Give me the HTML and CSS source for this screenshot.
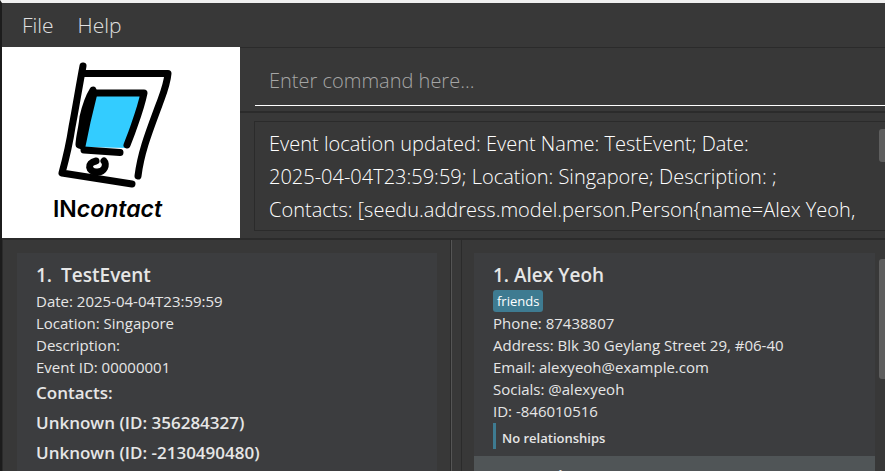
FILE: index.html
```html
<!DOCTYPE html>
<html lang="en">
<head>
<meta charset="utf-8">
<title>INcontact</title>
<link rel="stylesheet" href="styles.css">
</head>
<body>
<div class="window">
  <nav class="menu">
    <button type="button">File</button>
    <button type="button">Help</button>
  </nav>
  <header class="top">
    <svg class="logo" viewBox="0 0 238 191" role="img" aria-label="INcontact logo">
      <rect width="238" height="191" fill="#fff"/>
      <path d="M93 48 L139 49 L126 101 L82 100 Z" fill="#33ccff"/>
      <g fill="none" stroke="#000" stroke-linecap="round" stroke-linejoin="round">
        <path stroke-width="7" d="M81 19 C77 40 73 65 70 80 C67 100 63 115 60 126 L130 137"/>
        <path stroke-width="7" d="M82 26.500 H166 C165 38 161 47 157 58 C147 85 139 105 136 129"/>
        <path stroke-width="7" fill="#000" d="M91 43 C86 51 83 61 81 70 C80 81 77 91 77 98 L80 99 L85 75 L92 46 Z"/>
        <path stroke-width="7" d="M92 46 H142 C139 61 133 76 130 85 L125 98"/>
        <path stroke-width="7" d="M82 103 L118 105.500"/>
        <path stroke-width="7" d="M94 114 C84 116 87 125 94 125 C103 126 105 117 102 114"/>
      </g>
      <text class="logo-text" x="51" y="170">IN<tspan font-style="italic">contact</tspan></text>
    </svg>
    <div class="console">
      <div class="command">
        <input type="text" aria-label="Command" placeholder="Enter command here...">
      </div>
      <div class="result">
        <textarea readonly aria-label="Result">Event location updated: Event Name: TestEvent; Date:
2025-04-04T23:59:59; Location: Singapore; Description: ;
Contacts: [seedu.address.model.person.Person{name=Alex Yeoh,</textarea>
        <span class="thumb"></span>
      </div>
    </div>
  </header>
  <main class="panes">
    <section class="pane events">
      <article class="card">
        <h2><span class="index">1.</span>TestEvent</h2>
        <p>Date: 2025-04-04T23:59:59</p>
        <p>Location: Singapore</p>
        <p>Description:</p>
        <p>Event ID: 00000001</p>
        <h3>Contacts:</h3>
        <ul>
          <li>Unknown (ID: 356284327)</li>
          <li>Unknown (ID: -2130490480)</li>
        </ul>
      </article>
    </section>
    <div class="divider"></div>
    <section class="pane persons">
      <article class="card">
        <h2>1. Alex Yeoh</h2>
        <div class="tags"><span class="tag">friends</span></div>
        <p>Phone: 87438807</p>
        <p>Address: Blk 30 Geylang Street 29, #06-40</p>
        <p>Email: alexyeoh@example.com</p>
        <p>Socials: @alexyeoh</p>
        <p>ID: -846010516</p>
        <div class="relations">No relationships</div>
      </article>
      <article class="card alt">
        <h2>2. Bernice Yu</h2>
      </article>
      <span class="thumb"></span>
    </section>
  </main>
</div>
</body>
</html>
```
FILE: styles.css
```css
* {
  box-sizing: border-box;
  margin: 0;
  padding: 0;
}

body {
  font-family: "Open Sans", "Noto Sans", sans-serif;
  color: #e6e6e6;
  background: #383838;
}

.window {
  display: flex;
  flex-direction: column;
  height: 100vh;
  overflow: hidden;
  border-top: 3px solid #f0f0f0;
  border-left: 2px solid #1c1c1c;
}

.menu {
  display: flex;
  flex: none;
  height: 44px;
  padding-left: 8px;
}

.menu button {
  padding: 0 12px;
  border: 0;
  background: none;
  color: #e0e0e0;
  font: 300 21px "Open Sans", sans-serif;
}

.top {
  display: flex;
  flex: none;
}

.logo {
  flex: none;
  width: 238px;
  height: 191px;
}

.logo-text {
  font: 600 23px "Inter", sans-serif;
}

.console {
  display: flex;
  flex: 1;
  flex-direction: column;
  min-width: 0;
}

.command {
  height: 66px;
  padding: 8px 0 0 15px;
  border-top: 1px solid #2b2b2b;
  border-bottom: 2px solid #2b2b2b;
}

.command input {
  display: block;
  width: 100%;
  height: 50px;
  padding: 0 14px;
  border: 0;
  border-bottom: 1px solid #fff;
  background: none;
  color: #fff;
  font: 300 20px "Open Sans", sans-serif;
}

.command input::placeholder {
  color: #a6a6a6;
}

.result {
  position: relative;
  flex: 1;
  margin: 8px 0 7px 14px;
}

.result textarea {
  display: block;
  width: 100%;
  height: 110px;
  padding: 5px 8px 0 14px;
  border: 1px solid #2b2b2b;
  border-right: 0;
  background: none;
  color: #fff;
  font: 300 20px/33px "Open Sans", sans-serif;
  overflow: hidden;
  resize: none;
}

.thumb {
  position: absolute;
  right: -4px;
  width: 10px;
  border-radius: 3px;
  background: #5e5e5e;
}

.result .thumb {
  top: 8px;
  height: 33px;
}

.panes {
  display: grid;
  grid-template-columns: 449fr 10px 424fr;
  flex: 1;
  min-height: 0;
  border-top: 2px solid #2b2b2b;
}

.pane {
  position: relative;
  overflow: hidden;
  padding-top: 13px;
}

.events {
  padding-left: 14px;
  padding-right: 13px;
  border-left: 1px solid #2b2b2b;
  border-right: 1px solid #2b2b2b;
}

.persons {
  padding-left: 12px;
  padding-right: 10px;
  border-left: 1px solid #2b2b2b;
}

.persons .thumb {
  top: 19px;
  height: 120px;
}

.divider {
  border-left: 1px solid #555;
}

.card {
  padding: 8px 19px 7px;
  background: #3c3d3f;
}

.events .card {
  min-height: 100%;
}

.card.alt {
  background: #505557;
}

h2 {
  margin-bottom: 1px;
  font-size: 19px;
  font-weight: 600;
  line-height: 28px;
}

.index {
  margin-right: 9px;
}

p {
  font-size: 15px;
  line-height: 22px;
}

h3,
li {
  font-size: 17px;
  font-weight: 600;
  line-height: 30px;
  list-style: none;
}

.tags {
  display: flex;
}

.tag {
  padding: 0 4px;
  border-radius: 3px;
  background: #3e7b91;
  color: #fff;
  font-size: 13px;
  line-height: 22px;
}

.relations {
  margin-top: 1px;
  padding: 4px 0 0 6px;
  border-left: 3px solid #3e7b91;
  font-size: 13px;
  font-weight: 600;
  line-height: 22px;
}
```
